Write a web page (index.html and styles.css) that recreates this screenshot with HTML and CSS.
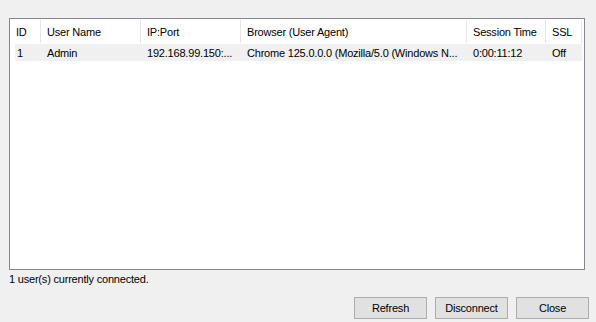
FILE: index.html
```html
<!DOCTYPE html>
<html>
<head>
<meta charset="utf-8">
<link rel="stylesheet" href="styles.css">
</head>
<body>
<div class="dialog">
  <div class="list">
    <div class="header">
      <div class="hcell c-id">ID</div>
      <div class="hcell c-user">User Name</div>
      <div class="hcell c-ip">IP:Port</div>
      <div class="hcell c-br">Browser (User Agent)</div>
      <div class="hcell c-st">Session Time</div>
      <div class="hcell c-ssl">SSL</div>
    </div>
    <div class="row">
      <div class="cell c-id first">1</div>
      <div class="cell c-user">Admin</div>
      <div class="cell c-ip">192.168.99.150:...</div>
      <div class="cell c-br">Chrome 125.0.0.0 (Mozilla/5.0 (Windows N...</div>
      <div class="cell c-st">0:00:11:12</div>
      <div class="cell c-ssl">Off</div>
    </div>
  </div>
  <div class="status">1 user(s) currently connected.</div>
  <div class="buttons">
    <button class="btn">Refresh</button>
    <button class="btn">Disconnect</button>
    <button class="btn">Close</button>
  </div>
</div>
</body>
</html>
```
FILE: styles.css
```css
html, body {
  margin: 0;
  padding: 0;
  background: #f0f0f0;
}
body {
  width: 596px;
  height: 322px;
  overflow: hidden;
  font-family: "Liberation Sans", Arial, sans-serif;
  font-size: 11px;
  color: #000;
}
.dialog {
  padding: 18px 11px 0 9px;
}
.list {
  height: 250px;
  border: 1px solid #828790;
  background: #fff;
}
.header {
  display: flex;
  height: 25px;
  box-sizing: border-box;
  padding: 1px 0;
}
.hcell {
  box-sizing: border-box;
  height: 23px;
  border-right: 1px solid #e5e5e5;
  padding: 2px 0 0 6px;
  line-height: 21px;
  white-space: nowrap;
  overflow: hidden;
  letter-spacing: -0.2px;
}
.row {
  display: flex;
  margin-left: 5px;
  height: 17px;
  background: #f0f0f0;
  width: 567px;
}
.cell {
  box-sizing: border-box;
  padding: 1px 0 0 6px;
  line-height: 16px;
  white-space: nowrap;
  overflow: hidden;
  letter-spacing: -0.2px;
}
.c-id { width: 31px; }
.c-user { width: 100px; }
.c-ip { width: 100px; }
.c-br { width: 226px; }
.c-st { width: 79px; }
.c-ssl { width: 36px; }
.cell.first {
  width: 26px;
  padding-left: 2px;
}
.status {
  margin-top: 2px;
  line-height: 15px;
  letter-spacing: -0.2px;
}
.buttons {
  display: flex;
  justify-content: flex-end;
  gap: 8px;
  margin-top: 10px;
  margin-right: -4px;
}
.btn {
  box-sizing: border-box;
  width: 73px;
  height: 22px;
  margin: 0;
  padding: 0;
  background: #e1e1e1;
  border: 1px solid #adadad;
  border-radius: 0;
  font-family: "Liberation Sans", Arial, sans-serif;
  font-size: 11px;
  line-height: 20px;
  color: #000;
  letter-spacing: -0.2px;
}
```
